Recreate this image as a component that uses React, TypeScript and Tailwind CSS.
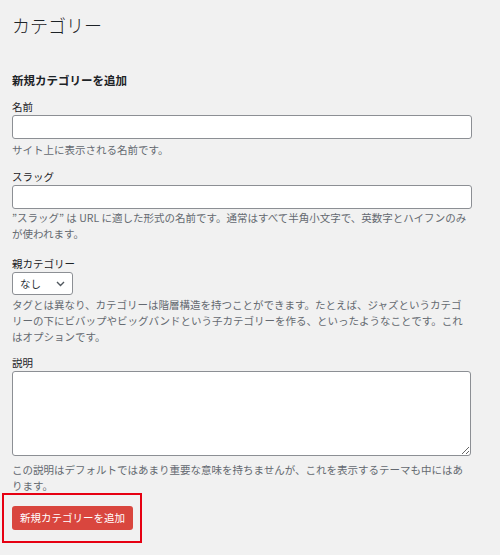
import React from 'react';

const font = { fontFamily: '"Noto Sans CJK JP", "Noto Sans", sans-serif' };

const Desc = ({ children, className = '' }: { children: React.ReactNode; className?: string }) => (
  <p className={`text-[10.5px] leading-[16px] text-[#646970] ${className}`}>{children}</p>
);

const Label = ({ children }: { children: React.ReactNode }) => (
  <label className="block text-[10.5px] leading-[16px] text-[#1d2327]">{children}</label>
);

export default function App() {
  return (
    <div className="w-[500px] h-[555px] overflow-hidden bg-[#f1f1f1] px-3 pt-[7px]" style={font}>
      <div className="w-[460px]">
        <h1 className="text-[18px] leading-[36px] font-light text-[#1d2327]">カテゴリー</h1>

        <h2 className="mt-[29px] text-[11.5px] leading-[16px] font-bold text-[#1d2327]">新規カテゴリーを追加</h2>

        <div className="mt-[11px]">
          <Label>名前</Label>
          <input className="block w-[460px] h-[24px] rounded-[3px] border border-[#8c8f94] bg-white" />
          <Desc className="mt-[3px]">サイト上に表示される名前です。</Desc>
        </div>

        <div className="mt-[11px]">
          <Label>スラッグ</Label>
          <input className="block w-[460px] h-[24px] rounded-[3px] border border-[#8c8f94] bg-white" />
          <Desc className="mt-[1px]">
            ”スラッグ” は URL に適した形式の名前です。通常はすべて半角小文字で、英数字とハイフンのみが使われます。
          </Desc>
        </div>

        <div className="mt-[14px]">
          <Label>親カテゴリー</Label>
          <div className="flex items-center justify-between w-[61px] h-[23px] rounded-[3px] border border-[#8c8f94] bg-white pl-[7px] pr-[7px]">
            <span className="text-[10.5px] text-[#2c3338]">なし</span>
            <svg width="9" height="6" viewBox="0 0 9 6" fill="none">
              <path d="M1 1l3.5 3.5L8 1" stroke="#50575e" strokeWidth="1.4" />
            </svg>
          </div>
          <Desc className="mt-[2px] w-[455px] leading-[16.5px]">
            タグとは異なり、カテゴリーは階層構造を持つことができます。たとえば、ジャズというカテゴリーの下にビバップやビッグバンドという子カテゴリーを作る、といったようなことです。これはオプションです。
          </Desc>
        </div>

        <div className="mt-[10px]">
          <Label>説明</Label>
          <textarea className="block w-[459px] h-[85px] rounded-[3px] border border-[#8c8f94] bg-white" />
          <Desc className="mt-[6px]">
            この説明はデフォルトではあまり重要な意味を持ちませんが、これを表示するテーマも中にはあります。
          </Desc>
        </div>

        <div className="-ml-[10px] mt-[-1px] w-fit border-2 border-[#e60012] pl-2 pt-2 pr-[7px] pb-[11px]">
          <button className="h-[24px] rounded-[3px] bg-[#d9463e] px-[8px] text-[10.5px] text-white">
            新規カテゴリーを追加
          </button>
        </div>
      </div>
    </div>
  );
}
